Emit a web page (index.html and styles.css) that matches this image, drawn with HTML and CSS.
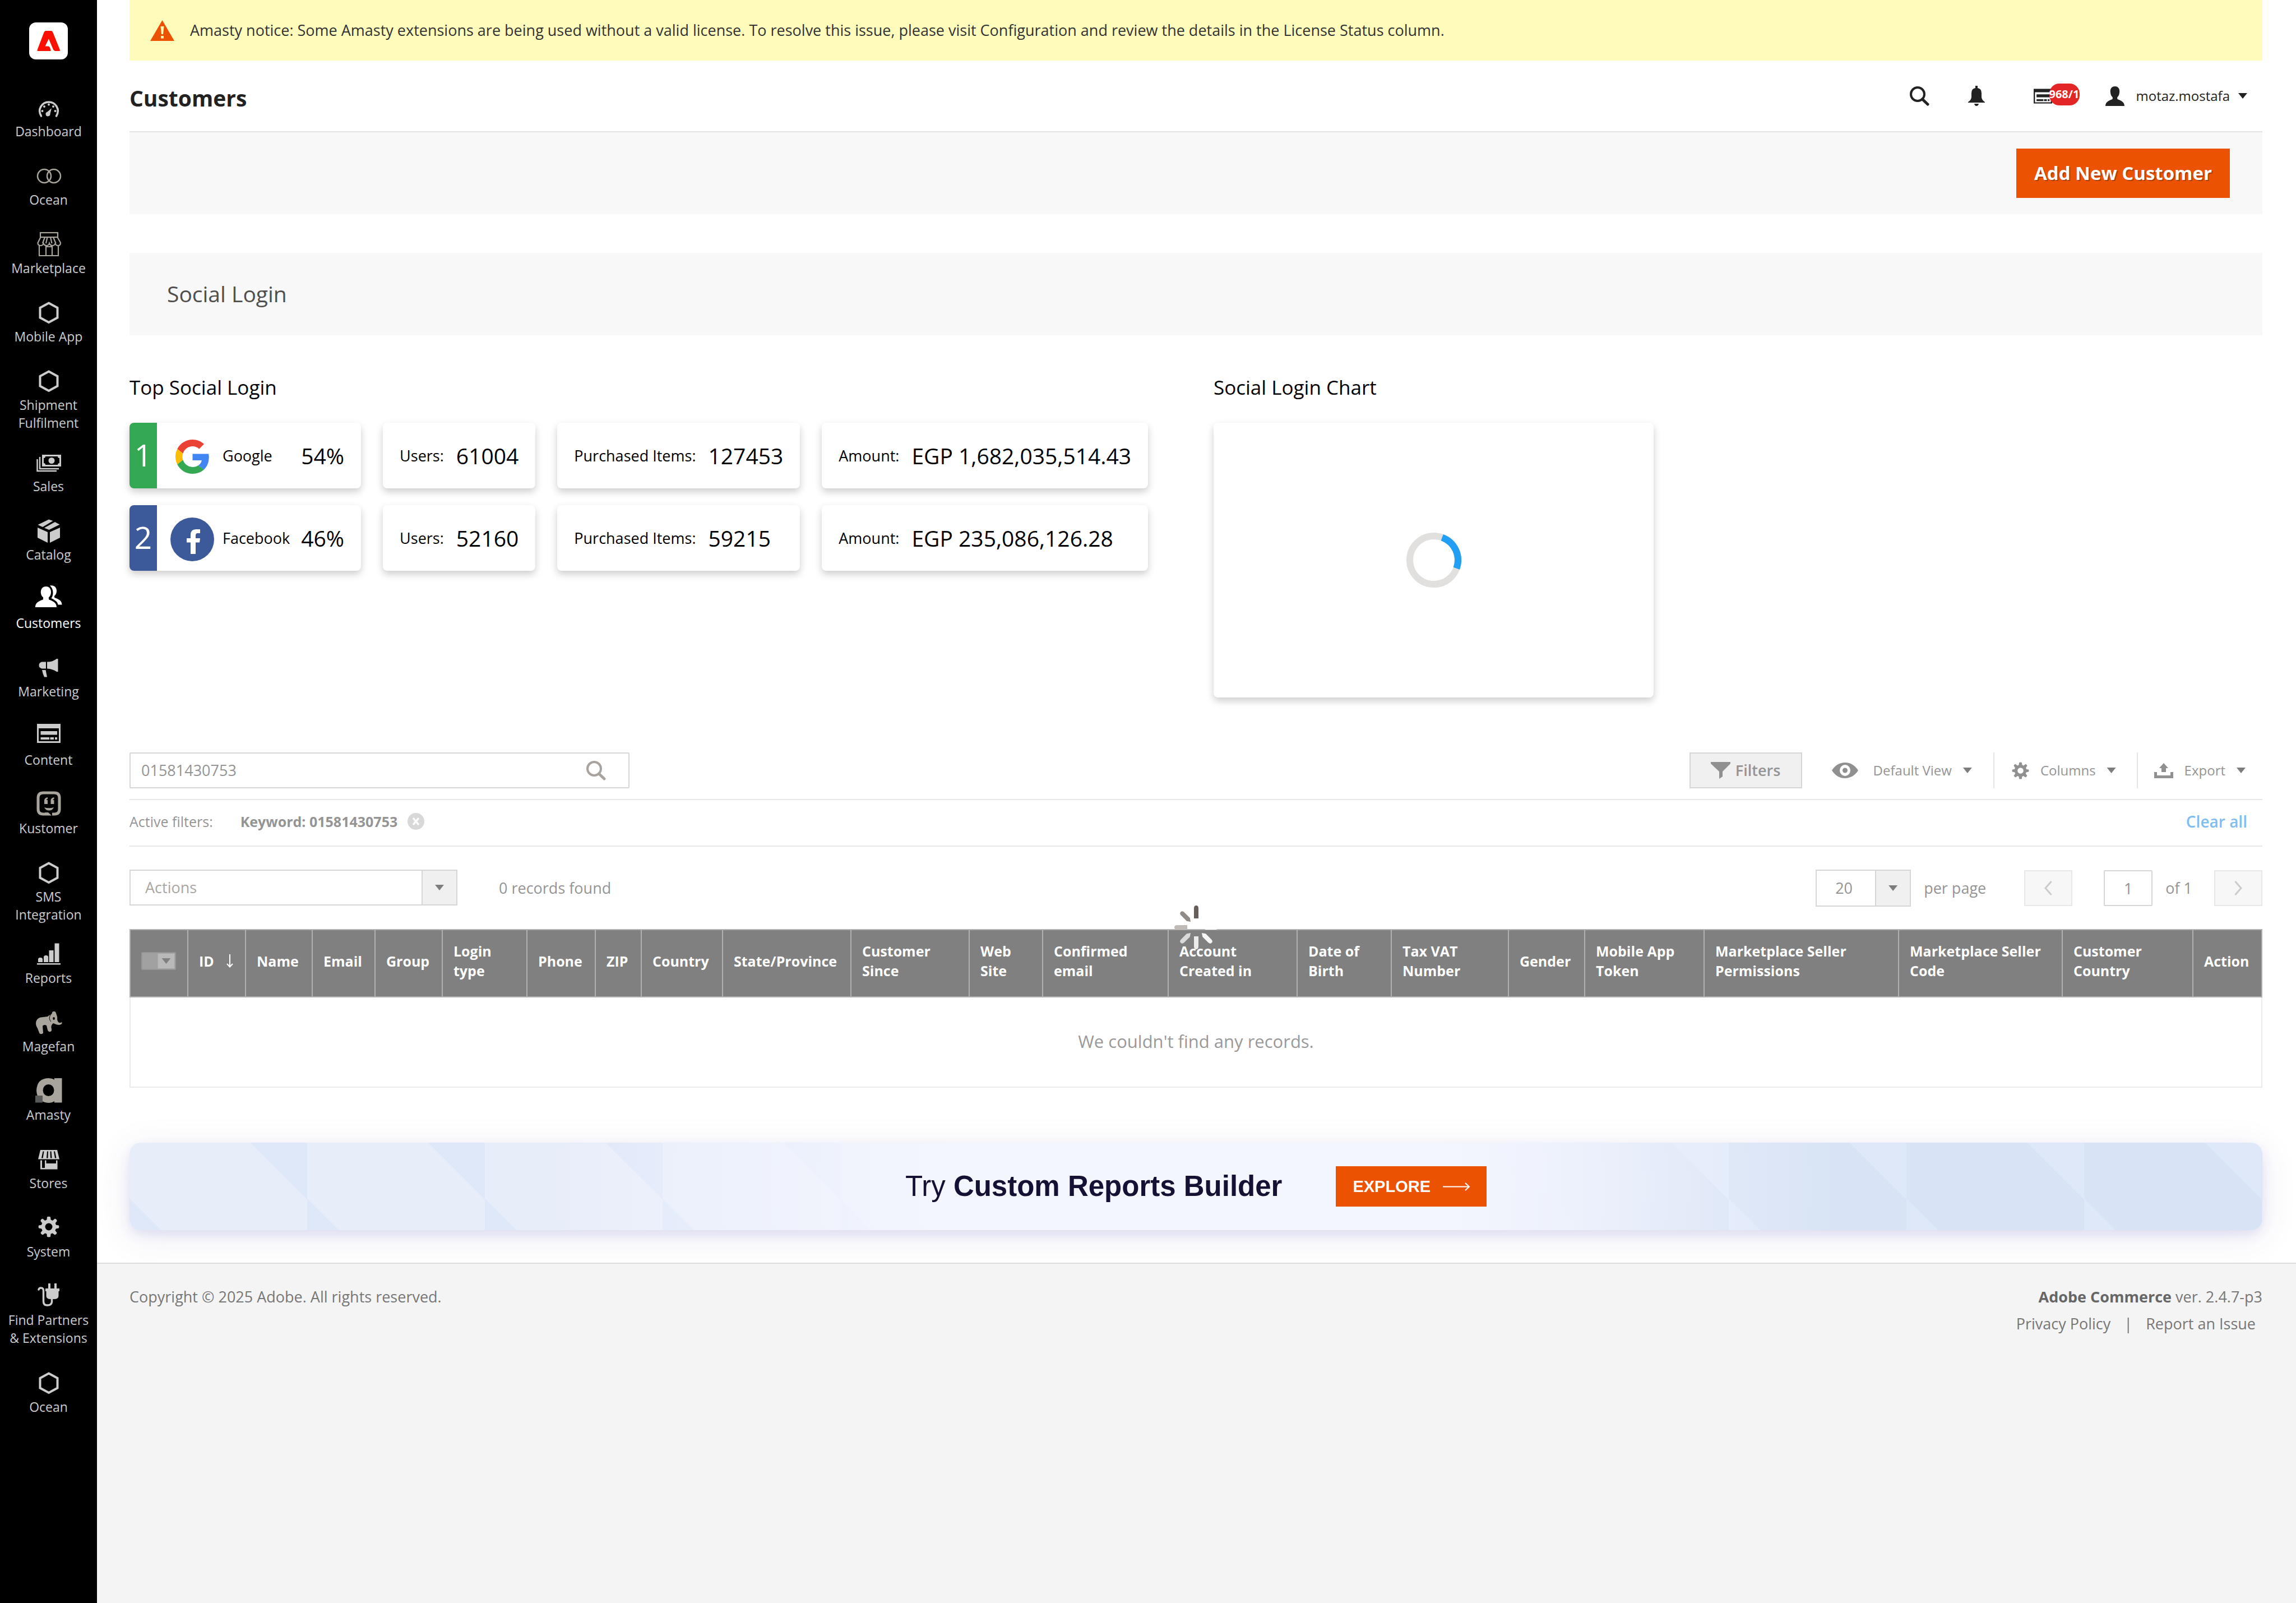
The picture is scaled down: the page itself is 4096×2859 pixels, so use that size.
FILE: index.html
```html
<!DOCTYPE html>
<html lang="en">
<head>
<meta charset="utf-8">
<title>Customers / Magento Admin</title>
<link rel="stylesheet" href="styles.css">
</head>
<body>
<svg class="sprite" aria-hidden="true">
  <symbol id="hexagon" viewBox="0 0 48 53"><path d="M24 9.500 39.500 18v17.500L24 44 8.500 35.500V18z" fill="none" stroke="currentColor" stroke-width="4"/></symbol>
  <symbol id="magnifier" viewBox="0 0 35 35"><circle cx="14" cy="14" r="12" fill="none" stroke="currentColor" stroke-width="4"/><path d="M22.500 23 32 32" fill="none" stroke="currentColor" stroke-width="5" stroke-linecap="round"/></symbol>
  <symbol id="gear" viewBox="0 0 38 38"><path fill="currentColor" fill-rule="evenodd" d="M16 1.500q3-1.500 6 0l.6 5 3.200 1.400 4.200-3.300q3 .8 3.800 3.800l-3 4.200 1.200 3.200 4.700.6q1.500 2.600 0 5.200l-4.900.8-1.400 3.200 3.200 4.200q-.8 3-3.800 3.800l-4.200-3-3 1.200-.6 4.900q-3 1.500-6 0l-.6-4.900-3-1.200-4.200 3q-3-.8-3.800-3.800l3.200-4.200-1.400-3.200-4.900-.8q-1.500-2.600 0-5.200l4.700-.6 1.200-3.200-3-4.200q.8-3 3.800-3.800l4.200 3.300 3.200-1.400zM19 12.500a6.500 6.500 0 1 0 0 13 6.500 6.500 0 0 0 0-13z"/></symbol>
  <symbol id="page" viewBox="0 0 42 34"><path fill="currentColor" fill-rule="evenodd" d="M0 0h42v34H0zM3 8v23h36V8zM6.500 13H36v6.500H6.500zM6.500 24H22v4H6.500zM23.500 24H30v4h-6.500zM32 24h4v4h-4z"/></symbol>
</svg>
<div class="app">
  <nav class="sidebar" aria-label="Main">
    <a class="logo" href="#" aria-label="Adobe Commerce">
      <svg width="41" height="36" viewBox="165 96 102 63" preserveAspectRatio="none"><path fill="#fa0f00" d="M203 96h25q4 0 7 4l31 54q3 5-3 5h-17q-6 0-9-5l-20-33-16 23h14q5 0 7 4l4 7q2 4-2 4h-54q-6 0-3-5l29-53q3-5 7-5z"/></svg>
    </a>
    <ul class="menu">
      <li><a href="#"><svg viewBox="0 0 48 53"><path d="M10.500 42C3 30 12 17 24 17s21 13 13.500 25" fill="none" stroke="currentColor" stroke-width="3.500" stroke-linecap="round"/><g fill="currentColor"><circle cx="12.500" cy="33" r="2"/><circle cx="16" cy="25" r="2"/><circle cx="24" cy="21.500" r="2"/><circle cx="32" cy="25" r="2"/><circle cx="35.500" cy="33" r="2"/><path d="m29 28-7.500 6.500a4 4 0 1 0 5 3.500z"/></g></svg><span>Dashboard</span></a></li>
      <li><a href="#"><svg class="warm" viewBox="0 0 48 53"><g fill="none" stroke="currentColor" stroke-width="2.500"><circle cx="16" cy="27" r="12"/><circle cx="33" cy="27" r="12"/></g></svg><span>Ocean</span></a></li>
      <li><a href="#"><svg class="warm" viewBox="0 0 48 53"><g fill="none" stroke="currentColor" stroke-width="2.200"><rect x="9" y="6" width="31" height="8"/><path d="M9.500 14h30l5.500 10q0 5-4.500 5-4 0-5-4-1 4-5 4t-5.500-4q-1 4-5 4t-5.500-4q-1 4-5 4-5 0-5-5zM17 14l-4 11M21.500 14 19 25M27 14l2.500 11M32 14l4.500 11M7 28v19h34V28M19 47V31h11v16"/></g></svg><span>Marketplace</span></a></li>
      <li><a href="#"><svg><use href="#hexagon"/></svg><span>Mobile App</span></a></li>
      <li><a href="#"><svg><use href="#hexagon"/></svg><span>Shipment Fulfilment</span></a></li>
      <li><a href="#"><svg viewBox="0 0 48 53"><path fill="currentColor" fill-rule="evenodd" d="M12 13h34v21H12zM18 16q0 3-3 3v9q3 0 3 3h22q0-3 3-3v-9q-3 0-3-3zM29 18a5.500 5.500 0 1 1 0 11 5.500 5.500 0 0 1 0-11z"/><path d="M8 17v21h34M3.500 21v21H38" fill="none" stroke="currentColor" stroke-width="2.500"/></svg><span>Sales</span></a></li>
      <li><a href="#"><svg viewBox="0 0 48 53"><path fill="currentColor" d="M24 6.500 31.500 9 13 20 4.500 16zM35 11l8.500 4.500L24.500 25 16 21.500zM4 21l18 8v19L4 39zM44 21l-18 8v19l18-9z"/></svg><span>Catalog</span></a></li>
      <li><a href="#" class="active"><svg viewBox="0 0 48 53"><path fill="currentColor" d="M19 4c6 0 9.500 4.500 9 11-.3 4-2 7-4 8.500V27c4 2.500 14 4 14 14H0C0 31 10 29.500 14 27v-3.500c-2-1.500-4-4.500-4.200-8.500C9.500 8.500 13 4 19 4zM26 2.500c7-1.500 12 2.500 12 9 0 5-2 8-4 9.500v2.500c4 2.500 13.500 4 13.500 13h-7c-1-6-6-8.500-12-11.500 2-3 3-6 3-10 0-5-2-9.500-5.500-12.500z"/></svg><span>Customers</span></a></li>
      <li><a href="#"><svg viewBox="0 0 48 53"><path fill="currentColor" d="M19 16.500v12h-7.500q-5-1.500-5-6t5-6zM21 16.500q10 0 17-5.500h2.500v23H38q-7-5-17-5.500zM12 31h6.500l2.500 12.500h-5q-3-6-4-12.500z"/></svg><span>Marketing</span></a></li>
      <li><a href="#"><svg viewBox="-3 -5 48 53"><use href="#page" width="42" height="34"/></svg><span>Content</span></a></li>
      <li><a href="#"><svg class="warm" viewBox="0 0 48 53"><path d="M19 44h-5Q5 44 5 35V15q0-9 9-9h20q9 0 9 9v20q0 9-9 9h-4" fill="none" stroke="currentColor" stroke-width="5"/><path fill="currentColor" d="M17 41h6l6 5.500H19zM22 14v3q-2 0-2 2h2v7h-6v-6q0-5 6-6zM33.500 14v3q-2 0-2 2h2v7h-6v-6q0-5 6-6zM16 32q8 2.500 17 0-2.500 5.500-8.500 5.500T16 32z"/></svg><span>Kustomer</span></a></li>
      <li><a href="#"><svg><use href="#hexagon"/></svg><span>SMS Integration</span></a></li>
      <li><a href="#"><svg viewBox="0 0 48 53"><path fill="currentColor" d="M3 43h42v2.500H3zM5 35l2-2h4l2 2v6H5zM15 31l2-2h4l2 2v10h-8zM24.500 20h8v21h-8zM34.500 7.500h8V41h-8z"/></svg><span>Reports</span></a></li>
      <li><a href="#"><svg class="warm" viewBox="0 0 48 53"><path fill="currentColor" fill-rule="evenodd" d="M1 28c0-8 7-11 13-11l8-1c4-4 7-2 8-7 1-3 6-3 7 1s3 7 2 11c1 5 4 8 8 5 2 2-1 5-5 5-5 0-8-3-10-3-4 3-4 7-3 10v3c-1 3-6 3-7-1l-2-8c-3-2-6-1-7 1l1 12c-1 3-6 3-7 0l-3-8c-2-3-3-6-3-9zM33 17a1.800 2.500 0 1 0 .1 0z"/><path d="M27 13q-4 7 1 12" fill="none" stroke="#000"/></svg><span>Magefan</span></a></li>
      <li><a href="#"><svg class="warm" viewBox="0 0 48 53"><path fill="currentColor" fill-rule="evenodd" d="M34 4h13.500v43.500H34v-2.500q-4 3-10 3Q3 47 2 26 3 4 24 4q6 0 10 2.500zM23.500 15a10 10.500 0 1 0 0 21 10 10.500 0 0 0 0-21z"/><path fill="#595959" d="M0 35h13v12.500H0z"/></svg><span>Amasty</span></a></li>
      <li><a href="#"><svg viewBox="0 0 48 53"><path fill="currentColor" fill-rule="evenodd" d="M9 10h30l4 16.500H5zM13.500 12.500 11 24.500h2.500l2-12zM21 12.500l-1 12h2.500l.5-12zM26.500 12.500l.5 12h2.500l-1-12zM33 12.500l2 12h2.500L35 12.500zM9 28.500h3V42h5V28.500h2.500V34H37v-5.500h2.500v16H9z"/></svg><span>Stores</span></a></li>
      <li><a href="#"><svg viewBox="-5 -6 48 53"><use href="#gear" width="38" height="38"/></svg><span>System</span></a></li>
      <li class="tall"><a href="#"><svg viewBox="0 0 48 53"><path fill="currentColor" d="M23 4h4v9h7V4h4v9h5v5h-1.500v8q0 6-8 6h-6q-8 0-8-6v-8H18v-5h5z"/><path d="M6 15q1-3 4-3 4.500 0 4.500 5v19q0 7 7 7t8-6v-6" fill="none" stroke="currentColor" stroke-width="3.500" stroke-linecap="round"/></svg><span>Find Partners &amp; Extensions</span></a></li>
      <li><a href="#"><svg><use href="#hexagon"/></svg><span>Ocean</span></a></li>
    </ul>
  </nav>

  <div class="page">
    <main class="content">
      <div class="notice" role="status">
        <svg width="43" height="37" viewBox="0 0 43 37"><path fill="#eb5202" d="M21.500 0 43 37H0z"/><path fill="#fffbbb" d="M18.500 11h6l-1.500 14h-3zM19 28h5v4.500h-5z"/></svg>
        <span>Amasty notice: Some Amasty extensions are being used without a valid license. To resolve this issue, please visit Configuration and review the details in the License Status column.</span>
      </div>

      <header class="header">
        <h1>Customers</h1>
        <div class="header-tools">
          <button class="tool search-tool" type="button" aria-label="Search"><svg width="35" height="35"><use href="#magnifier"/></svg></button>
          <button class="tool bell-tool" type="button" aria-label="Notifications"><svg width="30" height="36" viewBox="0 0 30 36"><path fill="currentColor" d="M13 0h4v4q7 1 7 9v7q0 5 6 9v1H0v-1q6-4 6-9v-7q0-8 7-9zM11 32h8q-1 4-4 4t-4-4z"/></svg></button>
          <button class="tool list-tool" type="button" aria-label="System messages"><svg width="33" height="27" viewBox="0 0 42 34"><use href="#page" width="42" height="34"/></svg><span class="badge">968/1</span></button>
          <button class="tool user-tool" type="button"><svg width="34" height="35" viewBox="0 0 34 35"><path fill="currentColor" d="M17 0c6 0 8.500 4.500 8.200 9.500-.3 5-1.700 8-4 10v3c4 2.500 12.800 4 12.800 12.500H0c0-8.500 8.800-10 12.800-12.500v-3c-2.300-2-3.700-5-4-10C8.500 4.500 11 0 17 0z"/></svg><span class="user-name">motaz.mostafa</span><span class="caret"></span></button>
        </div>
      </header>

      <div class="page-actions"><button class="primary" type="button">Add New Customer</button></div>

      <h2 class="section-title">Social Login</h2>

      <div class="dashboard">
        <section>
          <h3>Top Social Login</h3>
          <div class="stats">
            <div class="card provider"><span class="rank google">1</span><span class="brand"><svg width="61" height="61" viewBox="0 0 48 48"><path fill="#EA4335" d="M24 9.500c3.540 0 6.710 1.220 9.210 3.600l6.850-6.850C35.900 2.380 30.470 0 24 0 14.620 0 6.510 5.380 2.560 13.220l7.980 6.190C12.430 13.720 17.740 9.500 24 9.500z"/><path fill="#4285F4" d="M46.980 24.550c0-1.570-.15-3.090-.38-4.550H24v9.020h12.940c-.58 2.960-2.260 5.480-4.780 7.180l7.730 6c4.510-4.180 7.090-10.360 7.090-17.650z"/><path fill="#FBBC05" d="M10.530 28.590c-.48-1.450-.76-2.990-.76-4.590s.27-3.140.76-4.590l-7.980-6.190C.92 16.460 0 20.120 0 24c0 3.880.92 7.540 2.560 10.780l7.970-6.190z"/><path fill="#34A853" d="M24 48c6.480 0 11.930-2.130 15.890-5.810l-7.730-6c-2.150 1.450-4.920 2.300-8.160 2.300-6.260 0-11.570-4.220-13.470-9.910l-7.980 6.190C6.510 42.620 14.620 48 24 48z"/></svg></span><span>Google</span><strong>54%</strong></div>
            <div class="card"><span>Users:</span><strong>61004</strong></div>
            <div class="card"><span>Purchased Items:</span><strong>127453</strong></div>
            <div class="card"><span>Amount:</span><strong>EGP 1,682,035,514.43</strong></div>
            <div class="card provider"><span class="rank facebook">2</span><span class="brand"><svg width="78" height="78" viewBox="0 0 78 78"><circle cx="39" cy="39" r="39" fill="#3c5a9a"/><path fill="#fff" d="M36 65V44.500h-7V37h7v-6q0-10 9.500-10H53v7h-4.500Q45 28 45 32v5h8l-1 7.500h-7V65z"/></svg></span><span>Facebook</span><strong>46%</strong></div>
            <div class="card"><span>Users:</span><strong>52160</strong></div>
            <div class="card"><span>Purchased Items:</span><strong>59215</strong></div>
            <div class="card"><span>Amount:</span><strong>EGP 235,086,126.28</strong></div>
          </div>
        </section>
        <section>
          <h3>Social Login Chart</h3>
          <div class="chart"><svg width="98" height="98" viewBox="0 0 98 98" role="img" aria-label="Loading"><g fill="none" stroke-width="12"><circle cx="49" cy="49" r="43" stroke="#e1e0df"/><path stroke="#229ff3" d="M63.700 8.600A43 43 0 0 1 89.400 63.700"/></g></svg></div>
        </section>
      </div>

      <div class="grid">
        <div class="toolbar">
          <form class="search">
            <input type="text" value="01581430753" aria-label="Search by keyword">
            <button type="button" aria-label="Search"><svg width="35" height="35"><use href="#magnifier"/></svg></button>
          </form>
          <div class="view-actions">
            <button class="filters" type="button"><svg width="35" height="30" viewBox="0 0 35 30"><path fill="currentColor" d="M0 0h35v3L21 17v9l-6 4V17L0 3z"/></svg>Filters</button>
            <button class="drop view" type="button"><svg width="47" height="28" viewBox="0 0 47 28"><path fill="currentColor" fill-rule="evenodd" d="M0 14Q9 0 23.500 0T47 14Q38 28 23.500 28T0 14zM23.500 4a9.500 10 0 1 0 0 20 9.500 10 0 0 0 0-20z"/><circle cx="23.500" cy="14" r="4.500" fill="currentColor"/></svg><span>Default View</span><i class="caret"></i></button>
            <button class="drop columns" type="button"><svg width="31" height="31"><use href="#gear"/></svg><span>Columns</span><i class="caret"></i></button>
            <button class="drop export" type="button"><svg width="34" height="27" viewBox="0 0 34 27"><path fill="currentColor" d="M17 0l8 9h-4v7h-8V9H9zM0 16h5v6h24v-6h5v11H0z"/></svg><span>Export</span><i class="caret"></i></button>
          </div>
        </div>

        <div class="active-filters">
          <span class="filters-label">Active filters:</span>
          <span class="filter">Keyword: 01581430753</span>
          <button class="remove" type="button" aria-label="Remove filter"><svg width="30" height="30" viewBox="0 0 30 30"><circle cx="15" cy="15" r="15" fill="#d8d8d8"/><path d="m10 9 10 12M20 9 10 21" stroke="#fff" stroke-width="3.500"/></svg></button>
          <a class="clear" href="#">Clear all</a>
        </div>

        <div class="paging">
          <span class="select mass"><select aria-label="Actions"><option>Actions</option></select><span class="arrow"><i class="caret"></i></span></span>
          <span class="records">0 records found</span>
          <span class="select size"><select id="page-size"><option>20</option></select><span class="arrow"><i class="caret"></i></span></span>
          <label class="per-page" for="page-size">per page</label>
          <button class="pager prev" type="button" aria-label="Previous page"><svg width="14" height="26" viewBox="0 0 14 26"><path d="M12.500 1 2 13l10.500 12" fill="none" stroke="currentColor" stroke-width="3"/></svg></button>
          <input class="page-number" id="page-number" type="text" value="1">
          <label class="of" for="page-number">of 1</label>
          <button class="pager" type="button" aria-label="Next page"><svg width="14" height="26" viewBox="0 0 14 26"><path d="M1.500 1 12 13 1.500 25" fill="none" stroke="currentColor" stroke-width="3"/></svg></button>
        </div>

        <div class="table-wrap">
          <table>
            <colgroup>
              <col class="w103"><col class="w103"><col class="w119"><col class="w112"><col class="w120"><col class="w151"><col class="w122"><col class="w82"><col class="w145"><col class="w229"><col class="w211"><col class="w131"><col class="w224"><col class="w230"><col class="w168"><col class="w209"><col class="w136"><col class="w213"><col class="w347"><col class="w292"><col class="w233"><col>
            </colgroup>
            <thead>
              <tr>
                <th><span class="multi"><input type="checkbox" aria-label="Select rows"><button type="button" aria-label="Selection options"><i class="caret"></i></button></span></th>
                <th><span class="sorted">ID<svg width="12" height="24" viewBox="0 0 12 24"><path d="M6 0v22M1 17l5 5.500 5-5.500" fill="none" stroke="#fff" stroke-width="2"/></svg></span></th>
                <th>Name</th><th>Email</th><th>Group</th><th>Login<br>type</th><th>Phone</th><th>ZIP</th><th>Country</th><th>State/Province</th><th>Customer<br>Since</th><th>Web<br>Site</th><th>Confirmed<br>email</th><th>Account<br>Created in</th><th>Date of<br>Birth</th><th>Tax VAT<br>Number</th><th>Gender</th><th>Mobile App<br>Token</th><th>Marketplace Seller<br>Permissions</th><th>Marketplace Seller<br>Code</th><th>Customer<br>Country</th><th>Action</th>
              </tr>
            </thead>
            <tbody><tr><td colspan="22">We couldn't find any records.</td></tr></tbody>
          </table>
          <svg class="spinner" width="80" height="80" viewBox="-40 -40 80 80" role="img" aria-label="Loading">
            <path fill="#665e5a" d="M-4-16v-18q0-5 4-5t4 5v18z"/>
            <path fill="#fff" transform="rotate(45)" d="M-4-20v-14q0-5 4-5t4 5v14l-4 6z"/>
            <path fill="#fdfdfd" transform="rotate(90)" d="M-4-16v-18q0-5 4-5t4 5v18z"/>
            <path fill="#f6f6f6" transform="rotate(135)" d="M-4-20v-14q0-5 4-5t4 5v14l-4 6z"/>
            <path fill="#ebebeb" transform="rotate(180)" d="M-4-16v-18q0-5 4-5t4 5v18z"/>
            <path fill="#dadad8" transform="rotate(225)" d="M-4-20v-14q0-5 4-5t4 5v14l-4 6z"/>
            <path fill="#bfbab6" transform="rotate(270)" d="M-4-16v-18q0-5 4-5t4 5v18z"/>
            <path fill="#928b85" transform="rotate(315)" d="M-4-20v-14q0-5 4-5t4 5v14l-4 6z"/>
          </svg>
        </div>
      </div>

      <aside class="banner">
        <p>Try <b>Custom Reports Builder</b></p>
        <a class="explore" href="#">EXPLORE<svg width="48" height="15" viewBox="0 0 48 15"><path d="M0 7.500h46M40 1l7 6.500L40 14" fill="none" stroke="#fff" stroke-width="2"/></svg></a>
      </aside>
    </main>

    <footer class="footer">
      <p>Copyright © 2025 Adobe. All rights reserved.</p>
      <div class="legal">
        <p><strong>Adobe Commerce</strong> ver. 2.4.7-p3</p>
        <p class="links"><a href="#">Privacy Policy</a><span>|</span><a href="#">Report an Issue</a></p>
      </div>
    </footer>
  </div>
</div>
</body>
</html>
```
FILE: styles.css
```css
*, *::before, *::after { box-sizing: border-box; }
body { margin: 0; background: #fff; color: #333; font-family: "Open Sans", "Noto Sans", sans-serif; font-size: 27px; line-height: 36px; }
h1, h2, h3, p, ul { margin: 0; padding: 0; font-weight: 400; }
button, input, select { font: inherit; color: inherit; margin: 0; }
button { border: 0; padding: 0; background: none; cursor: pointer; }
a { color: inherit; text-decoration: none; }
svg { display: block; flex: none; overflow: visible; }
.sprite { position: absolute; width: 0; height: 0; }
.app { display: flex; min-height: 100vh; }

.sidebar { flex: none; width: 173px; background: #000; }
.logo { display: flex; align-items: center; justify-content: center; width: 69px; height: 66px; margin: 40px auto 46px; border-radius: 12px; background: #fff; }
.menu { list-style: none; }
.menu a { display: flex; flex-direction: column; align-items: center; min-height: 122px; padding: 13px 4px 15px; color: #ccc; font-size: 23px; line-height: 32px; text-align: center; }
.menu svg { width: 48px; height: 53px; }
.menu .warm { color: #aaa59c; }
.menu .active { color: #fff; }
.menu .tall { padding-bottom: 10px; }

.page { display: flex; flex: 1; flex-direction: column; min-width: 0; }
.content { padding: 0 60px 58px 58px; overflow: hidden; }
.notice { display: flex; align-items: center; gap: 28px; height: 108px; padding: 0 37px; background: #fffbbb; }
.header { display: flex; align-items: center; justify-content: space-between; height: 126px; color: #222; }
.header h1 { margin-top: 8px; font-size: 39px; font-weight: 700; line-height: 52px; }
.header-tools { display: flex; align-items: center; }
.tool { position: relative; display: flex; align-items: center; }
.search-tool { margin-right: 69px; }
.bell-tool { margin-right: 87px; }
.list-tool { margin-right: 95px; }
.badge { position: absolute; left: 28px; top: -9px; display: flex; align-items: center; justify-content: center; width: 54px; height: 39px; border-radius: 18px; background: #e22626; color: #fff; font-size: 20px; font-weight: 700; white-space: nowrap; }
.user-tool { padding-right: 27px; }
.user-name { margin: 0 15px 0 21px; font-size: 24px; }
.caret { display: block; flex: none; width: 16px; height: 10px; background: currentColor; clip-path: polygon(0 0, 100% 0, 50% 100%); }

.page-actions { display: flex; justify-content: flex-end; padding: 29px 58px; border-top: 2px solid #e3e3e3; background: #f8f8f8; }
.primary { height: 88px; padding: 0 32px; background: #eb5202; color: #fff; font-size: 33px; font-weight: 700; text-shadow: 2px 2px 0 rgba(0, 0, 0, .25); }
.section-title { margin-top: 69px; padding: 47px 67px 48px; background: #f8f8f8; color: #514f4d; font-size: 39px; line-height: 52px; }

.dashboard { display: grid; grid-template-columns: minmax(0, 1934fr) minmax(0, 1871fr); margin-top: 68px; color: #000; }
.dashboard h3 { margin-bottom: 38px; font-size: 35px; line-height: 50px; }
.stats { display: grid; grid-template-columns: repeat(4, auto); justify-content: start; gap: 30px 39px; }
.card, .chart { border-radius: 8px; background: #fff; box-shadow: 0 6px 14px rgba(0, 0, 0, .2); }
.card { display: flex; align-items: center; gap: 22px; height: 117px; padding: 0 30px; white-space: nowrap; }
.card strong { font-size: 39px; font-weight: 400; }
.provider { gap: 0; padding-left: 0; }
.provider strong { margin-left: auto; padding-left: 20px; }
.rank { align-self: stretch; width: 49px; border-radius: 8px 0 0 8px; color: #fff; font-size: 55px; line-height: 114px; text-align: center; }
.google { background: #34a853; }
.facebook { background: #3c5a9a; }
.brand { display: flex; justify-content: center; width: 78px; margin: 4px 15px 0 24px; }
.chart { display: flex; align-items: center; justify-content: center; max-width: 785px; height: 490px; }

.grid { margin-top: 98px; color: #949494; }
.toolbar { display: flex; justify-content: space-between; height: 85px; padding-bottom: 19px; border-bottom: 2px solid #e8e8e8; }
.search { display: flex; align-items: center; width: 892px; height: 64px; padding-right: 40px; border: 2px solid #d6d6d6; border-radius: 2px; }
.search input { flex: 1; min-width: 0; padding: 0 19px; border: 0; outline: 0; background: none; }
.search button { color: #a8a39e; }
.view-actions { display: flex; }
.filters { display: flex; align-items: center; justify-content: center; gap: 9px; width: 201px; height: 64px; border: 2px solid #d6d6d6; background: #f0f0f0; font-weight: 600; }
.filters svg, .drop svg { color: #909090; }
.drop { display: flex; align-items: center; height: 64px; border-left: 2px solid #e5e5e5; font-size: 24px; }
.drop .caret, .arrow .caret { color: #7d7d7d; }
.view { border-left-color: transparent; padding: 0 38px 0 51px; }
.view span { margin: 0 20px 0 27px; }
.columns { padding: 0 37px 0 31px; }
.columns span, .export span { margin: 0 20px; }
.export { padding: 0 30px 0 29px; }

.active-filters { display: flex; align-items: center; height: 83px; padding-bottom: 5px; border-bottom: 2px solid #e8e8e8; font-size: 25px; }
.filters-label { margin-right: 49px; }
.filter { margin-right: 18px; font-weight: 700; }
.clear { margin: 0 27px 0 auto; color: #80bdf0; font-size: 28px; font-weight: 600; }

.paging { display: flex; align-items: center; margin: 41px 0 40px; }
.select { display: flex; height: 64px; border: 2px solid #d6d6d6; background: #fff; }
.select select { flex: 1; min-width: 0; appearance: none; border: 0; outline: 0; background: none; }
.arrow { display: flex; align-items: center; justify-content: center; width: 62px; border-left: 2px solid #d6d6d6; background: #f0f0f0; }
.mass { align-self: flex-start; width: 585px; }
.mass select { padding-left: 26px; color: #aaa6a2; }
.records { margin: 0 auto 0 74px; }
.size { width: 170px; height: 66px; }
.size select { padding-left: 33px; }
.per-page { margin: 0 68px 0 23px; }
.pager { display: flex; align-items: center; justify-content: center; width: 86px; height: 64px; border: 2px solid #e8e8e8; background: #f7f7f7; color: #cbcbcb; }
.page-number { width: 87px; height: 64px; margin: 0 23px 0 56px; border: 2px solid #d6d6d6; border-radius: 2px; outline: 0; text-align: center; }
.of { margin-right: 39px; }

.table-wrap { position: relative; }
table { width: 100%; table-layout: fixed; border-collapse: collapse; }
th { height: 120px; padding: 0 0 8px 19px; border: 2px solid #b1b1b1; background: #808080; color: #fff; font-size: 25px; font-weight: 700; line-height: 35px; text-align: left; white-space: nowrap; }
td { height: 161px; padding: 0 0 4px; border: 2px solid #ebebeb; border-top-color: #b1b1b1; color: #999; font-size: 31px; text-align: center; }
.w82 { width: 82px; } .w103 { width: 103px; } .w112 { width: 112px; } .w119 { width: 119px; } .w120 { width: 120px; } .w122 { width: 122px; } .w131 { width: 131px; } .w136 { width: 136px; } .w145 { width: 145px; } .w151 { width: 151px; } .w168 { width: 168px; } .w209 { width: 209px; } .w211 { width: 211px; } .w213 { width: 213px; } .w224 { width: 224px; } .w229 { width: 229px; } .w230 { width: 230px; } .w233 { width: 233px; } .w292 { width: 292px; } .w347 { width: 347px; }
.sorted { display: flex; align-items: center; gap: 22px; }
.multi { display: flex; width: 62px; height: 32px; border: 2px solid #969696; border-radius: 2px; background: #a1a1a1; }
.multi input { flex: 1; appearance: none; }
.multi button { display: flex; align-items: center; justify-content: center; width: 31px; border: 1px solid #a9a9a9; background: #b9b9b9; color: #808080; }
.spinner { position: absolute; left: 50%; top: -43px; margin-left: -40px; }

.banner { display: flex; align-items: center; justify-content: center; gap: 96px; height: 156px; margin-top: 98px; border-radius: 20px; background:
  radial-gradient(circle, #f4f6fe 450px, rgba(244, 246, 254, 0) 1150px),
  linear-gradient(45deg, #dfe8f9 40px, transparent 40px) 0 0 / 317px 100%,
  linear-gradient(225deg, #dfe8f9 72px, transparent 72px) 0 0 / 317px 100%,
  linear-gradient(90deg, #e8eef9 50%, #d8e3f5 75%);
  box-shadow: 0 8px 20px rgba(70, 70, 170, .12), 0 12px 64px rgba(70, 70, 170, .1); color: #141134; font-family: "Liberation Sans", Arial, sans-serif; font-size: 51px; line-height: 60px; }
.explore { display: flex; align-items: center; gap: 22px; height: 72px; padding: 0 30px; background: #eb5202; color: #fff; font-size: 29px; font-weight: 700; }

.footer { position: relative; display: flex; flex: 1; justify-content: space-between; padding: 35px 60px 58px 58px; border-top: 2px solid #ddd; background: #f4f4f4; color: #777; line-height: 48px; }
.legal { text-align: right; }
.legal strong { color: #666; }
.links { display: flex; justify-content: flex-end; gap: 24px; padding-right: 12px; }
```
